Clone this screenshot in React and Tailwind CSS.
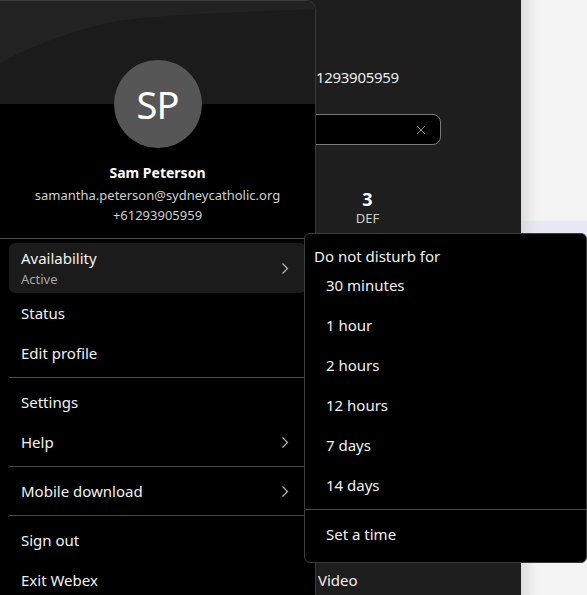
import { X } from 'lucide-react';

const FONT = { fontFamily: '"Noto Sans", "Open Sans", sans-serif' };

function Chevron() {
  return (
    <svg width="8" height="13" viewBox="0 0 8 13" fill="none" className="shrink-0">
      <path d="M1.5 1.5 L6.5 6.5 L1.5 11.5" stroke="#b4b4b4" strokeWidth="1.2" />
    </svg>
  );
}

function MenuItem({ label, sub, chevron, active }) {
  return (
    <div
      className={`flex items-center justify-between pl-3 pr-[17px] rounded-md ${
        sub ? 'h-[50px]' : 'h-10'
      } ${active ? 'bg-[#1b1b1b]' : ''}`}
    >
      <div className="flex flex-col">
        <span className="text-[15px] leading-5 text-[#f2f2f2]">{label}</span>
        {sub && <span className="text-[13px] leading-[18px] mt-[2px] text-[#a8a8a8]">{sub}</span>}
      </div>
      {chevron && <Chevron />}
    </div>
  );
}

const Divider = () => <div className="h-px bg-[#4a4a4a] my-1" />;

const DND = ['30 minutes', '1 hour', '2 hours', '12 hours', '7 days', '14 days'];

export default function App() {
  return (
    <div className="relative w-[587px] h-[595px] overflow-hidden flex bg-[#1e1e1e]" style={FONT}>
      {/* app behind the menu */}
      <div className="w-[521px] h-full bg-[#1e1e1e] flex flex-col">
        <div className="pl-[316px] pt-[67px] text-[15px] leading-5 text-[#ececec] tracking-[-0.3px]">1293905959</div>
        <div className="ml-[90px] mt-[27px] w-[351px] h-[31px] rounded-lg border border-[#7a7a7a] bg-black flex items-center justify-end pr-[12px]">
          <X size={14} strokeWidth={1.3} color="#bdbdbd" />
        </div>
        <div className="ml-[105px] mt-[42px] grid grid-cols-3 w-[315px]">
          <div />
          <div />
          <div className="flex flex-col items-center">
            <span className="text-[18px] leading-6 font-bold text-white">3</span>
            <span className="text-[13px] leading-4 -mt-[1px] text-[#cfcfcf]">DEF</span>
          </div>
        </div>
        <div className="mt-auto mb-[5px] pl-[318px] text-[15px] leading-5 text-[#f0f0f0] relative">
          <span className="absolute left-[338px] -top-[18px] w-[8px] h-[2px] bg-[#3fb8a8]" />
          Video
        </div>
      </div>
      <div className="flex-1 h-full flex flex-col bg-[#f3f3f3] relative">
        <div className="h-[221px]" />
        <div className="h-[14px] bg-[#e7e8f6]" />
        <div className="absolute inset-y-0 left-0 w-[16px] bg-gradient-to-r from-[#cfcfcf] to-transparent opacity-60" />
      </div>

      {/* profile menu */}
      <div className="absolute left-0 top-0 w-[316px] h-[600px] bg-black border-r border-t border-[#3a3a3a] rounded-tr-[10px] overflow-hidden flex flex-col">
        <div className="relative h-[104px] bg-[#1b1b1b]">
          <svg className="absolute inset-0" width="316" height="104" viewBox="0 0 316 104" preserveAspectRatio="none">
            <path d="M0 0 H316 V8 C220 12 130 14 95 25 C60 34 25 48 0 62 Z" fill="#222222" />
          </svg>
        </div>
        <div className="relative -mt-[44px] flex flex-col items-center">
          <div className="w-[88px] h-[88px] rounded-full bg-[#565656] flex items-center justify-center">
            <span className="text-[38px] text-white leading-none tracking-tight">SP</span>
          </div>
          <div className="mt-[15px] text-[14px] leading-5 font-bold text-white">Sam Peterson</div>
          <div className="mt-[2px] text-[13px] leading-5 text-[#cfcfcf]">samantha.peterson@sydneycatholic.org</div>
          <div className="text-[13px] leading-5 text-[#cfcfcf]">+61293905959</div>
        </div>
        <div className="mt-[13px] h-px bg-[#4a4a4a]" />
        <div className="px-[9px] pt-1 flex flex-col">
          <MenuItem label="Availability" sub="Active" chevron active />
          <MenuItem label="Status" />
          <MenuItem label="Edit profile" />
          <Divider />
          <MenuItem label="Settings" />
          <MenuItem label="Help" chevron />
          <Divider />
          <MenuItem label="Mobile download" chevron />
          <Divider />
          <MenuItem label="Sign out" />
          <MenuItem label="Exit Webex" />
        </div>
      </div>

      {/* do not disturb submenu */}
      <div className="absolute left-[304px] top-[233px] w-[283px] bg-black border border-[#3c3c3c] rounded-md pt-3 pb-2">
        <div className="pl-[9px] text-[15px] leading-5 text-[#f2f2f2]">Do not disturb for</div>
        <div className="flex flex-col -mt-px">
          {DND.map((t) => (
            <div key={t} className="h-10 flex items-center pl-[21px] text-[15px] text-[#f2f2f2]">{t}</div>
          ))}
          <div className="h-px bg-[#4a4a4a] my-1" />
          <div className="h-10 flex items-center pl-[21px] text-[15px] text-[#f2f2f2]">Set a time</div>
        </div>
      </div>
    </div>
  );
}
